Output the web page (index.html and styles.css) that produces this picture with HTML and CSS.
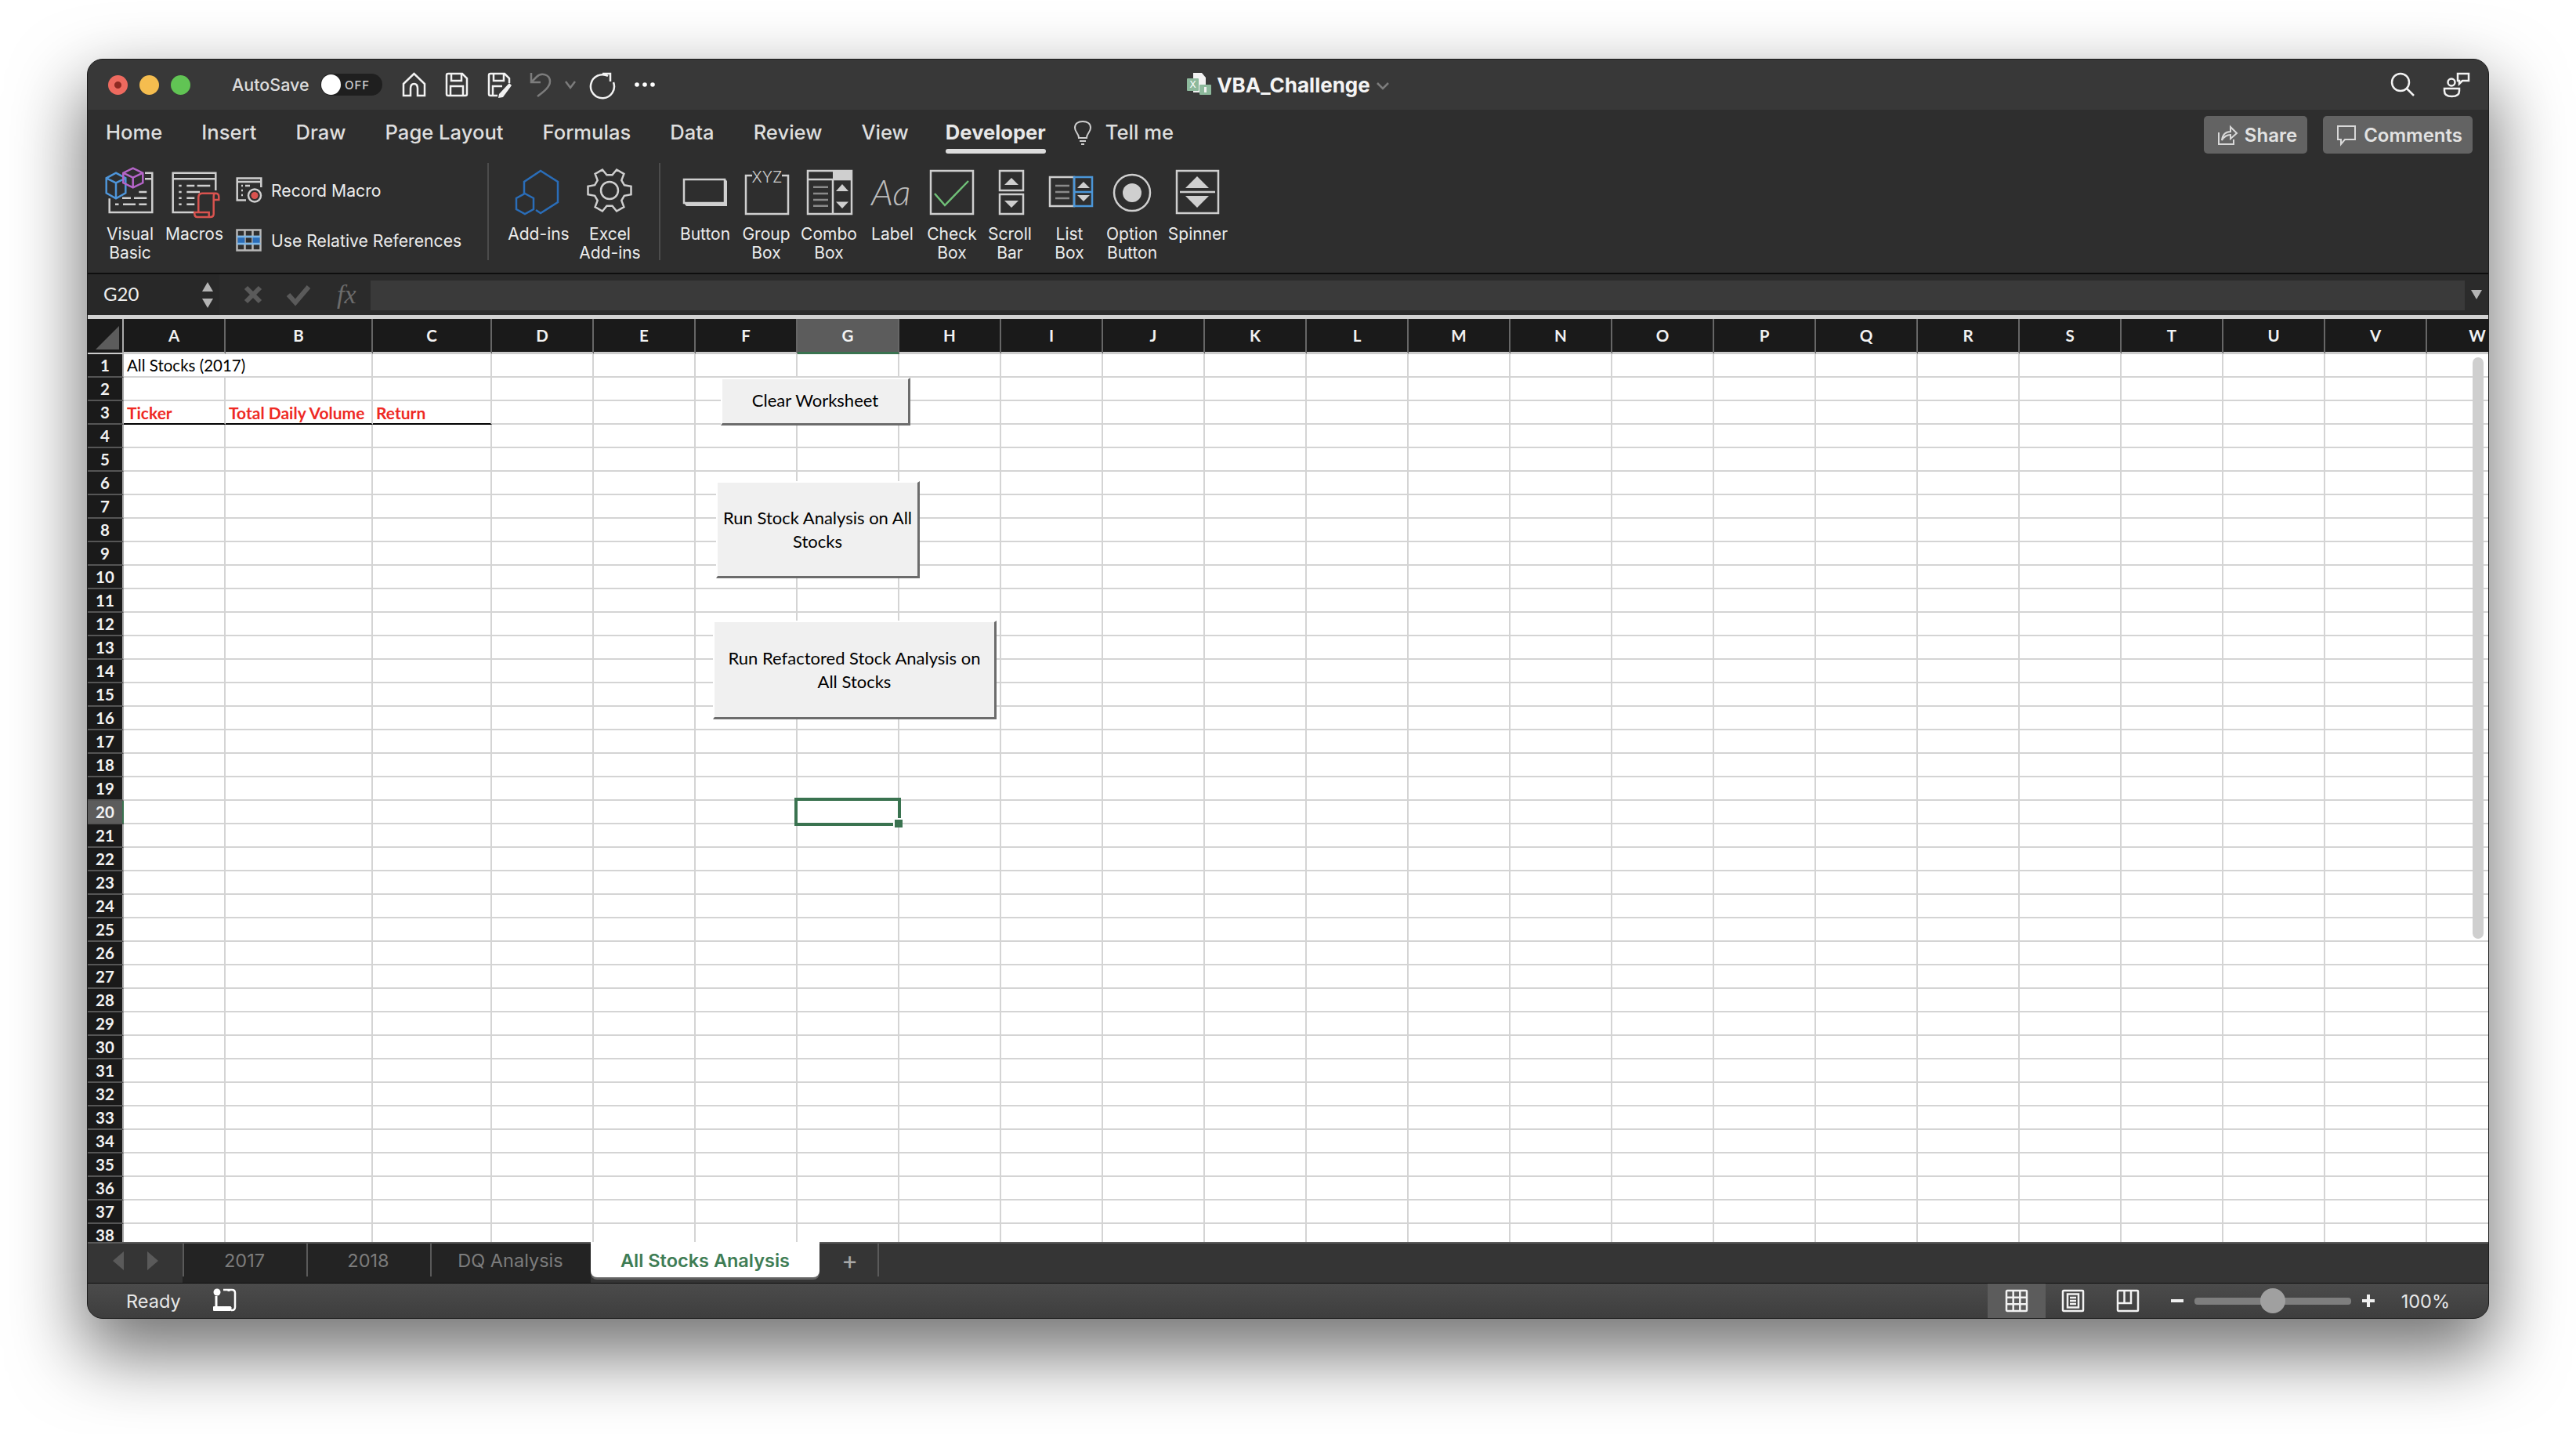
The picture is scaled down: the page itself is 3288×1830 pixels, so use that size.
FILE: index.html
```html
<!DOCTYPE html>
<html lang="en">

<head>
    <meta charset="UTF-8">
    <meta name="viewport" content="width=device-width, initial-scale=1.0">
    <title>VBA_Challenge</title>
    <link rel="stylesheet" href="styles.css">
</head>

<body>
    <div class="window">

        <!-- title bar -->
        <div class="titlebar">
            <div class="title-left">
                <div class="lights">
                    <span class="light red"></span>
                    <span class="light yellow"></span>
                    <span class="light green"></span>
                </div>
                <span class="autosave">AutoSave</span>
                <div class="toggle"><span class="knob"></span><span class="off">OFF</span></div>
                <svg class="ico ico-white qa-home" width="32" height="32" viewBox="0 0 32 32"><path d="M2 15 L15.500 2 L29 15 V30 H20 V21 Q20 15 15.500 15 Q11 15 11 21 V30 H2 Z" /></svg>
                <svg class="ico ico-white qa-save" width="32" height="32" viewBox="0 0 32 32"><path d="M3 4 Q3 2 5 2 H23 L29 8 V28 Q29 30 27 30 H5 Q3 30 3 28 Z M9 2 V11 H22 V2 M8 30 V18 H24 V30" /></svg>
                <svg class="ico ico-white qa-saveas" width="32" height="32" viewBox="0 0 32 32"><path d="M3 4 Q3 2 5 2 H23 L29 8 V14 M9 2 V11 H22 V2 M3 4 V28 Q3 30 5 30 H14 M8 30 V18 H20" /><path class="fill-white" d="M29 14 L32 17 L21 32 L15 33 L16 28 Z" /></svg>
                <svg class="ico ico-dim qa-undo" width="30" height="34" viewBox="0 0 30 34"><path d="M3 2 V14 H15 M3 14 L10 7 C16 1 27 4 27 13 C27 20 19 26 11 32" /></svg>
                <svg class="ico ico-dim qa-chev" width="14" height="10" viewBox="0 0 14 10"><path d="M1 1 L7 9 L13 1" /></svg>
                <svg class="ico ico-white qa-redo" width="34" height="34" viewBox="0 0 34 34"><path d="M24 6 A15 15 0 1 0 31 14 M17 3 H27 V13" /></svg>
                <svg class="qa-more" width="26" height="6" viewBox="0 0 26 6"><circle cx="3" cy="3" r="2.800" fill="#fff" /><circle cx="13" cy="3" r="2.800" fill="#fff" /><circle cx="23" cy="3" r="2.800" fill="#fff" /></svg>
            </div>
            <div class="title-mid">
                <svg width="32" height="30" viewBox="0 0 32 30">
                    <path d="M8 0 H19 L24 6 V25 H8 Z" fill="#f2f2f2" />
                    <rect x="0" y="7" width="15" height="16" rx="1" fill="#8db99c" />
                    <text x="3.500" y="19" class="xls-x">X</text>
                    <rect x="16" y="15" width="15" height="13" rx="1" fill="#8db99c" />
                    <rect x="22" y="18" width="3" height="7" fill="#f2f2f2" />
                </svg>
                <span class="doc-name">VBA_Challenge</span>
                <svg class="ico ico-dim title-chev" width="16" height="10" viewBox="0 0 16 10"><path d="M1 1 L8 8 L15 1" /></svg>
            </div>
            <div class="title-right">
                <svg class="ico ico-white" width="30" height="30" viewBox="0 0 30 30"><circle cx="12" cy="12" r="11" /><path d="M20 20 L29 29" /></svg>
                <svg class="ico ico-white" width="34" height="32" viewBox="0 0 34 32"><circle cx="10" cy="13" r="4.500" /><path d="M1 21 H20 V24 Q20 31 10.500 31 Q1 31 1 24 Z M18 2 H32 V11 H24 L20 15 V11 H18 Z" /></svg>
            </div>
        </div>

        <!-- ribbon tabs -->
        <div class="tabs">
            <span class="tab">Home</span>
            <span class="tab">Insert</span>
            <span class="tab">Draw</span>
            <span class="tab">Page Layout</span>
            <span class="tab">Formulas</span>
            <span class="tab">Data</span>
            <span class="tab">Review</span>
            <span class="tab">View</span>
            <span class="tab active">Developer</span>
            <div class="tell">
                <svg class="ico" width="24" height="32" viewBox="0 0 24 32"><path d="M7 22 C7 16 2 15 2 9 C2 4 6 1 12 1 C18 1 22 4 22 9 C22 15 17 16 17 22 Z M8 26 H16 M10 30 H14" /></svg>
                <span class="tab">Tell me</span>
            </div>
            <div class="actions">
                <div class="action">
                    <svg class="ico ico-light" width="24" height="26" viewBox="0 0 24 26"><path d="M1 10 V25 H20 V19 M5 20 C6 12 10 9 16 9 V3 L24 11 L16 18 V13 C11 13 8 15 5 20 Z" /></svg>
                    Share
                </div>
                <div class="action">
                    <svg class="ico ico-light" width="24" height="26" viewBox="0 0 24 26"><path d="M1 2 H23 V19 H10 L5 25 V19 H1 Z" /></svg>
                    Comments
                </div>
            </div>
        </div>

        <!-- ribbon -->
        <div class="ribbon">
            <div class="group group-code">
                <div class="item">
                    <svg class="ico" width="66" height="60" viewBox="0 0 66 60">
                        <path d="M52 7.700 H61.300 V58 H6.700 V40.300 M52 15.300 H61.300 M44.300 32 H54.300 M23 39.700 H34 M38 39.700 H54.300 M14 47.700 H18.500 M24 47.700 H40 M44.300 47.700 H54.300" />
                        <path class="s-blue" d="M15 7.700 L27.300 14.300 V33.300 L15 40.300 L2.700 33.300 V14.300 Z M2.700 14.300 L15 20.300 L27.300 14.300 M15 20.300 V40.300" />
                        <path class="s-purple" d="M36.700 1.700 L49.300 7.700 V20.300 L36.700 26.300 L24.300 20.300 V7.700 Z M24.300 7.700 L36.700 13.700 L49.300 7.700 M36.700 13.700 V26.300" />
                    </svg>
                    <span class="label">Visual<br>Basic</span>
                </div>
                <div class="item">
                    <svg class="ico" width="66" height="60" viewBox="0 0 66 60">
                        <path d="M60.300 30 V7.700 H5.700 V58 H33 M5.700 15.300 H60.300 M13.300 24 H16.700 M23.300 24 H33.300 M36.700 24 H53.300 M13.300 32 H16.700 M23.300 32 H40 M13.300 39.700 H16.700 M23.300 39.700 H33.300 M13.300 47.700 H16.700 M23.300 47.700 H33.300" />
                        <path class="s-red" d="M38.300 57 V39 Q38.300 33.700 43.300 33.700 H60 Q64.300 33.700 64.300 38 V42 H57.700 V38 Q57.700 33.700 60 33.700 M57.700 42 V60 Q57.700 64 53.300 64 H37 Q33.300 64 33.300 60.300 V58 H51.700 V64" />
                    </svg>
                    <span class="label">Macros</span>
                </div>
                <div class="record">
                    <div class="record-row">
                        <svg class="ico" width="34" height="34" viewBox="0 0 34 34">
                            <path d="M32.300 13 V1.500 H1.700 V29.500 H13 M1.700 6 H32.300 M7 11 H9 M12 11 H18 M7 17 H9 M7 23 H9" />
                            <circle cx="24" cy="23.500" r="8" />
                            <circle cx="24" cy="23.500" r="4.500" class="fill-red" />
                        </svg>
                        <span class="record-text">Record Macro</span>
                    </div>
                    <div class="record-row">
                        <svg class="ico ico-grid" width="34" height="30" viewBox="0 0 34 30">
                            <rect x="1.500" y="1.500" width="30" height="26" />
                            <path d="M11.500 1.500 V27.500 M21.500 1.500 V27.500 M1.500 10 H31.500 M1.500 19 H31.500" />
                            <rect x="2.500" y="10" width="9" height="9" class="fill-blue" />
                            <rect x="21.500" y="10" width="9" height="9" class="fill-blue" />
                            <path class="s-sky" d="M1.500 10 H31.500 M1.500 19 H31.500" />
                        </svg>
                        <span class="record-text">Use Relative References</span>
                    </div>
                </div>
            </div>
            <div class="sep"></div>
            <div class="group group-addins">
                <div class="item">
                    <svg class="ico s-addin" width="60" height="60" viewBox="0 0 60 60">
                        <path d="M27 55 L33 59 L55 45 V19 L33 5 L12 19 V34" />
                        <path d="M13 34 L24 40 V54 L13 60 L2 54 V40 Z" />
                    </svg>
                    <span class="label">Add-ins</span>
                </div>
                <div class="item">
                    <svg class="ico" width="60" height="60" viewBox="0 0 60 60">
                        <polygon points="48.800,23.200 57.500,24.700 57.500,35.300 48.800,36.800 45.300,42.900 48.400,51.100 39.100,56.500 33.500,49.700 26.500,49.700 20.900,56.500 11.600,51.100 14.700,42.900 11.200,36.800 2.500,35.300 2.500,24.700 11.200,23.200 14.700,17.100 11.600,8.900 20.900,3.500 26.500,10.300 33.500,10.300 39.100,3.500 48.400,8.900 45.300,17.100" />
                        <circle cx="30" cy="30" r="11" />
                    </svg>
                    <span class="label">Excel<br>Add-ins</span>
                </div>
            </div>
            <div class="sep"></div>
            <div class="group group-controls">
                <div class="item">
                    <svg class="ico" width="60" height="60" viewBox="0 0 60 60">
                        <rect x="3" y="16" width="52" height="30" />
                        <path class="fill-grey" d="M2 45 L6 50 H58 V18 L55 15 V45 Z" />
                    </svg>
                    <span class="label">Button</span>
                </div>
                <div class="item">
                    <svg class="ico" width="60" height="60" viewBox="0 0 60 60">
                        <path d="M12 11 H4 V60 H58 V11 H50" />
                        <text x="31" y="20" class="ctl-xyz">XYZ</text>
                    </svg>
                    <span class="label">Group<br>Box</span>
                </div>
                <div class="item">
                    <svg class="ico" width="60" height="60" viewBox="0 0 60 60">
                        <rect x="35" y="5" width="24" height="11" class="fill-grey" />
                        <rect x="3" y="5" width="56" height="55" />
                        <path d="M3 16 H59 M35 16 V60" />
                        <path class="s-mid" d="M10 25.700 H29 M10 34 H29 M10 42 H29 M10 49.700 H29" />
                        <polygon points="47,22 55,31 39,31" class="fill-grey" />
                        <polygon points="47,53 55,44.500 39,44.500" class="fill-grey" />
                    </svg>
                    <span class="label">Combo<br>Box</span>
                </div>
                <div class="item">
                    <svg class="ico" width="60" height="60" viewBox="0 0 60 60"><text x="3" y="49" class="ctl-aa">Aa</text></svg>
                    <span class="label">Label</span>
                </div>
                <div class="item">
                    <svg class="ico" width="60" height="60" viewBox="0 0 60 60">
                        <rect x="3" y="5" width="54" height="55" />
                        <path class="s-green" d="M8 34 L21 49 L51 18" />
                    </svg>
                    <span class="label">Check<br>Box</span>
                </div>
                <div class="item">
                    <svg class="ico" width="60" height="60" viewBox="0 0 60 60">
                        <rect x="17" y="5" width="30" height="25" />
                        <rect x="17" y="35" width="30" height="25" />
                        <polygon points="32,14 41,23 23,23" class="fill-grey" />
                        <polygon points="32,52 41,43 23,43" class="fill-grey" />
                    </svg>
                    <span class="label">Scroll<br>Bar</span>
                </div>
                <div class="item">
                    <svg class="ico" width="60" height="60" viewBox="0 0 60 60">
                        <rect x="5" y="13" width="31" height="37" />
                        <path class="s-mid" d="M12 24 H30 M12 32 H30 M12 40 H30" />
                        <path class="s-sky2" d="M36 13 H59 V50 H36 Z M36 32 H59" />
                        <polygon points="48,19 56,27 40,27" class="fill-grey" />
                        <polygon points="48,44 56,36 40,36" class="fill-grey" />
                    </svg>
                    <span class="label">List<br>Box</span>
                </div>
                <div class="item">
                    <svg class="ico" width="60" height="60" viewBox="0 0 60 60">
                        <circle cx="30" cy="33" r="23" />
                        <circle cx="30" cy="33" r="12" class="fill-grey" />
                    </svg>
                    <span class="label">Option<br>Button</span>
                </div>
                <div class="item">
                    <svg class="ico" width="60" height="60" viewBox="0 0 60 60">
                        <rect x="3" y="5" width="53" height="54" />
                        <path d="M7 32 H52" />
                        <polygon points="29,12 44,27 14,27" class="fill-grey" />
                        <polygon points="29,52 44,37 14,37" class="fill-grey" />
                    </svg>
                    <span class="label">Spinner</span>
                </div>
            </div>
        </div>

        <!-- formula bar -->
        <div class="formulabar">
            <div class="namebox">
                <span class="cellname">G20</span>
                <div class="spin"><span class="tri-up"></span><span class="tri-down"></span></div>
            </div>
            <div class="fb-tools">
                <svg class="ico ico-fb" width="22" height="22" viewBox="0 0 22 22"><path d="M2 2 L20 20 M20 2 L2 20" /></svg>
                <svg class="ico ico-fb" width="30" height="24" viewBox="0 0 30 24"><path d="M2 12 L11 22 L28 2" /></svg>
                <span class="fx">fx</span>
            </div>
            <div class="fb-input"></div>
            <div class="fb-drop"><span class="tri-down"></span></div>
        </div>

        <!-- sheet, cells are filled in by sheet.js -->
        <div class="sheet">
            <div class="grid" id="grid"></div>

            <div class="xl-btn btn-clear">Clear Worksheet</div>
            <div class="xl-btn btn-run">Run Stock Analysis on All<br>Stocks</div>
            <div class="xl-btn btn-refactor">Run Refactored Stock Analysis on<br>All Stocks</div>

            <div class="selection"><span class="handle"></span></div>
            <div class="thumb"></div>
        </div>

        <!-- sheet tabs -->
        <div class="sheetbar">
            <div class="sheet-nav"><span class="tri-left"></span><span class="tri-right"></span></div>
            <div class="sheet-tab">2017</div>
            <div class="sheet-tab">2018</div>
            <div class="sheet-tab wide">DQ Analysis</div>
            <div class="sheet-tab current">All Stocks Analysis</div>
            <div class="sheet-add">+</div>
        </div>

        <!-- status bar -->
        <div class="statusbar">
            <span class="ready">Ready</span>
            <svg class="macro-ico" width="32" height="30" viewBox="0 0 32 30">
                <path d="M14 2 H25 Q29 2 29 6 V24 Q29 28 25 28 H24" fill="none" stroke="#fff" stroke-width="2.500" />
                <circle cx="6" cy="5" r="4.500" fill="#fff" />
                <path d="M5 10 V23 M21 2 V4 M23 24 V28" stroke="#fff" stroke-width="3" fill="none" />
                <rect x="1" y="23" width="23" height="6" rx="1" fill="#fff" />
            </svg>
            <div class="status-right">
                <div class="view-btn selected">
                    <svg class="ico ico-white" width="28" height="28" viewBox="0 0 28 28"><rect x="1" y="1" width="26" height="26" rx="1" /><path d="M9.700 1 V27 M18.300 1 V27 M1 9.700 H27 M1 18.300 H27" /></svg>
                </div>
                <div class="view-btn">
                    <svg class="ico ico-white" width="28" height="28" viewBox="0 0 28 28"><rect x="1" y="1" width="26" height="26" rx="1" /><rect x="7" y="5.500" width="14" height="17" /><path d="M10 10 H18 M10 14 H18 M10 18 H18" /></svg>
                </div>
                <div class="view-btn">
                    <svg class="ico ico-white" width="28" height="28" viewBox="0 0 28 28"><rect x="1" y="1" width="26" height="26" rx="1" /><path d="M1 17 H18 V1 M9.500 1 V17" /></svg>
                </div>
                <div class="zoom-minus"></div>
                <div class="slider"><span class="slider-knob"></span></div>
                <div class="zoom-plus"></div>
                <span class="zoom-val">100%</span>
            </div>
        </div>

    </div>

    <script src="sheet.js"></script>
</body>

</html>
```

FILE: styles.css
```css
* {
    box-sizing: border-box;
}

html,
body {
    margin: 0;
    height: 100%;
    background-color: #fff;
    overflow: hidden;
}

body {
    padding: 75px 0 0 111px;
    font-family: "Inter", "Liberation Sans", sans-serif;
    color: #e6e6e6;
}

.window {
    width: 3066px;
    height: 1608px;
    display: flex;
    flex-direction: column;
    border: 1px solid #1c1c1c;
    border-radius: 20px;
    overflow: hidden;
    background-color: #2e2e2e;
    box-shadow: 0 40px 90px 6px rgba(0, 0, 0, 0.55);
}

/* svg icons */
.ico {
    fill: none;
    stroke: #cfcfcf;
    stroke-width: 2.5;
    overflow: visible;
    flex: none;
}

.ico-white {
    stroke: #f2f2f2;
}

.ico-light {
    stroke: #d8d8d8;
    stroke-width: 2;
}

.ico-dim {
    stroke: #7c7c7c;
}

.ico-fb {
    stroke: #5a5a5a;
    stroke-width: 6;
}

.ico-grid {
    stroke: #b8b8b8;
}

.s-blue {
    stroke: #4e95d9;
}

.s-purple {
    stroke: #b565c9;
}

.s-red {
    stroke: #d9534f;
}

.s-addin {
    stroke: #2a6db8;
}

.s-green {
    stroke: #70c078;
}

.s-mid {
    stroke: #8a8a8a;
}

.s-sky {
    stroke: #7db7e8;
}

.s-sky2 {
    stroke: #4b96d8;
}

.fill-white {
    fill: #f2f2f2;
    stroke: none;
}

.fill-red {
    fill: #d9534f;
    stroke: none;
}

.fill-blue {
    fill: #2a6db8;
    stroke: none;
}

.fill-grey {
    fill: #cfcfcf;
    stroke: none;
}

.ctl-xyz {
    font-size: 20px;
    font-weight: 300;
    text-anchor: middle;
    fill: #cfcfcf;
    stroke: none;
}

.ctl-aa {
    font-family: "Lato", sans-serif;
    font-size: 46px;
    font-style: italic;
    font-weight: 300;
    fill: #bdbdbd;
    stroke: none;
}

.xls-x {
    font-size: 12px;
    fill: #fff;
}

/* title bar */
.titlebar {
    height: 64px;
    flex: none;
    display: grid;
    grid-template-columns: 1fr auto 1fr;
    align-items: center;
    background-color: #383838;
}

.title-left {
    display: flex;
    align-items: center;
    padding-left: 26px;
}

.lights {
    display: flex;
    gap: 15px;
    margin-right: 53px;
}

.light {
    width: 25px;
    height: 25px;
    border-radius: 50%;
}

.red {
    background: radial-gradient(circle, #8e2a22 0 4px, #ee6a5f 5px);
}

.yellow {
    background-color: #f5bd4f;
}

.green {
    background-color: #61c454;
}

.autosave {
    font-size: 21.500px;
    font-weight: 500;
    color: #dcdcdc;
    width: 113px;
}

.toggle {
    width: 79px;
    height: 28px;
    border-radius: 14px;
    background-color: #1f1f1f;
    display: flex;
    align-items: center;
    padding-left: 1px;
    margin-right: 25px;
}

.knob {
    width: 25px;
    height: 26px;
    border-radius: 50%;
    background-color: #fff;
}

.off {
    font-size: 15px;
    font-weight: 500;
    margin-left: 5px;
    color: #cfcfcf;
    letter-spacing: 1px;
}

.qa-home,
.qa-save,
.qa-saveas {
    margin-right: 22px;
}

.qa-undo {
    margin-right: 16px;
}

.qa-chev {
    margin-right: 17px;
}

.qa-redo {
    margin-right: 24px;
}

.title-mid {
    display: flex;
    align-items: center;
}

.doc-name {
    font-size: 26px;
    font-weight: 700;
    color: #f4f4f4;
    margin-left: 6px;
}

.title-chev {
    margin-left: 8px;
    margin-top: 4px;
}

.title-right {
    display: flex;
    align-items: center;
    justify-content: flex-end;
    gap: 37px;
    padding-right: 23px;
}

/* ribbon tabs */
.tabs {
    height: 56px;
    flex: none;
    display: flex;
    gap: 50px;
    padding-left: 23px;
}

.tab {
    position: relative;
    height: 56px;
    padding-top: 14px;
    font-size: 25.600px;
    line-height: 30px;
    font-weight: 500;
    color: #dedede;
}

.tab.active {
    font-weight: 700;
    color: #e8e8e8;
    margin-left: -3px;
}

.tab.active::after {
    content: "";
    position: absolute;
    left: 0;
    right: 0;
    bottom: 0;
    height: 6px;
    border-radius: 3px;
    background-color: #dcdcdc;
}

.tell {
    display: flex;
    gap: 17px;
    margin-left: -15px;
}

.tell .ico {
    stroke-width: 2;
    margin-top: 14px;
}

.actions {
    margin-left: auto;
    display: flex;
    gap: 20px;
    padding: 8px 20px 0 0;
}

.action {
    height: 48px;
    display: flex;
    align-items: center;
    gap: 10px;
    padding: 0 13px 0 18px;
    background-color: #636363;
    border-radius: 5px;
    font-size: 24px;
    font-weight: 600;
    color: #e2e2e2;
}

/* ribbon */
.ribbon {
    height: 152px;
    flex: none;
    display: flex;
    padding: 17px 0 0 13px;
    background-color: #2e2e2e;
}

.group {
    display: grid;
    justify-items: center;
    align-items: start;
}

.group-code {
    grid-template-columns: 82px 82px 316px;
}

.group-addins {
    grid-template-columns: 91px 91px;
}

.group-controls {
    grid-template-columns: 78px 78px 82px 80px 72px 76px 76px 84px 84px;
}

.item {
    display: flex;
    flex-direction: column;
    align-items: center;
}

.label {
    margin-top: 14px;
    font-size: 21px;
    line-height: 24px;
    text-align: center;
    white-space: nowrap;
    color: #ececec;
}

.record {
    justify-self: start;
    padding-left: 12px;
    display: flex;
    flex-direction: column;
    gap: 4px;
}

.record-row {
    height: 60px;
    display: flex;
    align-items: center;
    gap: 11px;
}

.record-text {
    font-size: 21.200px;
    color: #ececec;
}

.sep {
    width: 2px;
    height: 124px;
    margin: -5px 18px 0 17px;
    background-color: #4c4c4c;
}

/* formula bar */
.formulabar {
    height: 59px;
    flex: none;
    display: flex;
    border-top: 2px solid #0e0e0e;
    border-bottom: 5px solid #d2d2d2;
    background-color: #2b2b2b;
}

.namebox {
    width: 168px;
    display: flex;
    align-items: center;
    justify-content: space-between;
    padding: 0 8px 0 20px;
    background-color: #282828;
}

.cellname {
    font-family: "Lato", sans-serif;
    font-size: 24px;
    color: #eee;
    padding-bottom: 3px;
}

.spin {
    display: flex;
    flex-direction: column;
    gap: 9px;
}

.tri-up,
.tri-down {
    display: block;
    width: 0;
    height: 0;
    border-left: 7px solid transparent;
    border-right: 7px solid transparent;
}

.tri-up {
    border-bottom: 12px solid #b4b4b4;
}

.tri-down {
    border-top: 12px solid #b4b4b4;
}

.fb-tools {
    width: 193px;
    display: flex;
    align-items: center;
    padding-left: 32px;
    gap: 32px;
}

.fx {
    font-family: "Liberation Serif", serif;
    font-style: italic;
    font-size: 34px;
    color: #6c6c6c;
    margin-left: 2px;
}

.fb-input {
    flex: 1;
    margin: 8px 0 6px;
    background-color: #3a3a3a;
}

.fb-drop {
    width: 30px;
    display: flex;
    align-items: center;
    justify-content: center;
}

/* sheet */
.sheet {
    position: relative;
    flex: 1;
    min-height: 0;
    overflow: hidden;
    background-color: #fff;
}

.grid {
    display: grid;
    grid-template-columns: 46px 130px 188px 152px repeat(20, 130px);
    grid-template-rows: 45px;
    grid-auto-rows: 30px;
    font-family: "Lato", sans-serif;
    font-size: 20.500px;
}

.corner {
    position: relative;
    background-color: #1a1a1a;
    border-right: 2px solid #aaa;
    border-bottom: 2px solid #ccc;
}

.corner::after {
    content: "";
    position: absolute;
    left: 10px;
    top: 9px;
    width: 30px;
    height: 30px;
    background-color: #5c5c5c;
    clip-path: polygon(100% 0, 100% 100%, 0 100%);
}

.col-head,
.row-head {
    display: flex;
    align-items: center;
    justify-content: center;
    background-color: #1a1a1a;
    color: #f2f2f2;
    font-weight: 700;
}

.col-head {
    border-right: 2px solid #666;
    border-bottom: 3px solid #ccc;
}

.row-head {
    border-right: 2px solid #aaa;
    border-bottom: 2px solid #555;
}

.col-head.on,
.row-head.on {
    background-color: #5c5c5c;
}

.col-head.on {
    border-bottom-color: #3a7350;
}

.row-head.on {
    border-right-color: #3a7350;
}

.cell {
    display: flex;
    align-items: center;
    padding-left: 4px;
    white-space: nowrap;
    color: #000;
    border-right: 2px solid #d4d4d4;
    border-bottom: 2px solid #d4d4d4;
}

.span2 {
    grid-column: span 2;
}

.hdr {
    color: #ee2a24;
    font-size: 21px;
    font-weight: 700;
    border-bottom: 2px solid #000;
}

.xl-btn {
    position: absolute;
    display: flex;
    align-items: center;
    justify-content: center;
    text-align: center;
    font-family: "Lato", sans-serif;
    font-size: 22px;
    line-height: 30px;
    color: #000;
    background-color: #f0f0f0;
    border: 2px solid #fff;
    border-right: 3px solid #6c6c6c;
    border-bottom: 3px solid #6c6c6c;
}

.btn-clear {
    left: 808px;
    top: 75px;
    width: 242px;
    height: 61px;
    padding-bottom: 2px;
}

.btn-run {
    left: 802px;
    top: 207px;
    width: 260px;
    height: 124px;
}

.btn-refactor {
    left: 798px;
    top: 385px;
    width: 362px;
    height: 126px;
}

.selection {
    position: absolute;
    left: 902px;
    top: 611px;
    width: 136px;
    height: 36px;
    border: 4px solid #3a7350;
}

.handle {
    position: absolute;
    right: -6px;
    bottom: -6px;
    width: 12px;
    height: 12px;
    background-color: #3a7350;
    border-left: 2px solid #fff;
    border-top: 2px solid #fff;
}

.thumb {
    position: absolute;
    left: 3044px;
    top: 49px;
    width: 14px;
    height: 742px;
    border-radius: 7px;
    background-color: #cfcfcf;
}

/* sheet tabs */
.sheetbar {
    height: 52px;
    flex: none;
    display: flex;
    border-top: 2px solid #5a5a5a;
    background-color: #353535;
}

.sheet-nav {
    width: 121px;
    display: flex;
    align-items: center;
    justify-content: center;
    gap: 30px;
    padding-bottom: 6px;
}

.tri-left,
.tri-right {
    width: 0;
    height: 0;
    border-top: 12px solid transparent;
    border-bottom: 12px solid transparent;
}

.tri-left {
    border-right: 14px solid #5a5a5a;
}

.tri-right {
    border-left: 14px solid #5a5a5a;
}

.sheet-tab {
    width: 158px;
    display: flex;
    align-items: center;
    justify-content: center;
    padding-bottom: 7px;
    font-size: 23.500px;
    color: #7c7c7c;
    background: linear-gradient(#5a5a5a, #5a5a5a) left top / 2px 42px no-repeat #232323;
}

.sheet-tab.wide {
    width: 205px;
}

.sheet-tab.current {
    width: 292px;
    height: 45px;
    margin-top: -2px;
    padding: 2px 0 0;
    border-radius: 0 0 8px 8px;
    background: #fff;
    box-shadow: 0 3px 0 #636363;
    color: #3f7d55;
    font-weight: 600;
}

.sheet-add {
    width: 76px;
    height: 42px;
    padding-left: 3px;
    display: flex;
    align-items: center;
    justify-content: center;
    font-size: 32px;
    color: #a8a8a8;
    border-right: 2px solid #5a5a5a;
}

/* status bar */
.statusbar {
    height: 45px;
    flex: none;
    display: flex;
    align-items: center;
    padding-left: 49px;
    border-top: 1px solid #0e0e0e;
    background: linear-gradient(#4b4b4b, #3e3e3e);
}

.ready {
    font-size: 23.500px;
    color: #e8e8e8;
    width: 110px;
}

.macro-ico {
    margin-bottom: 2px;
}

.status-right {
    align-self: stretch;
    margin-left: auto;
    display: flex;
    align-items: center;
    padding-right: 49px;
}

.view-btn {
    width: 70px;
    align-self: stretch;
    display: flex;
    align-items: center;
    justify-content: center;
}

.view-btn.selected {
    width: 74px;
    background-color: #5c5c5c;
}

.zoom-minus,
.zoom-plus {
    position: relative;
    width: 16px;
    height: 4px;
    background-color: #f0f0f0;
    margin-left: 20px;
}

.zoom-plus::after {
    content: "";
    position: absolute;
    left: 6px;
    top: -6px;
    width: 4px;
    height: 16px;
    background-color: #f0f0f0;
}

.slider {
    position: relative;
    width: 200px;
    height: 9px;
    margin: 0 14px;
    border-radius: 4px;
    background-color: #7e7e7e;
}

.zoom-plus {
    margin-left: 0;
}

.slider-knob {
    position: absolute;
    left: 84px;
    top: -12px;
    width: 32px;
    height: 32px;
    border-radius: 50%;
    background-color: #a0a0a0;
}

.zoom-val {
    margin-left: 34px;
    font-size: 23.500px;
    color: #e8e8e8;
}
```

FILE: sheet.js
```js
// bygger rutenettet: kolonner A-W, rader 1-38
var grid = document.getElementById("grid")
var letters = "ABCDEFGHIJKLMNOPQRSTUVW".split("")
var html = '<div class="corner"></div>'

for (var c in letters) {
    html += '<div class="col-head' + (letters[c] == "G" ? " on" : "") + '">' + letters[c] + "</div>"
}

for (var r = 1; r <= 38; r++) {
    html += '<div class="row-head' + (r == 20 ? " on" : "") + '">' + r + "</div>"
    for (var i = 0; i < letters.length; i++) {
        if (r == 1 && i == 0) {
            html += '<div class="cell span2">All Stocks (2017)</div>'
            i++
        } else if (r == 3 && i < 3) {
            html += '<div class="cell hdr">' + ["Ticker", "Total Daily Volume", "Return"][i] + "</div>"
        } else {
            html += '<div class="cell"></div>'
        }
    }
}

grid.innerHTML = html
```
